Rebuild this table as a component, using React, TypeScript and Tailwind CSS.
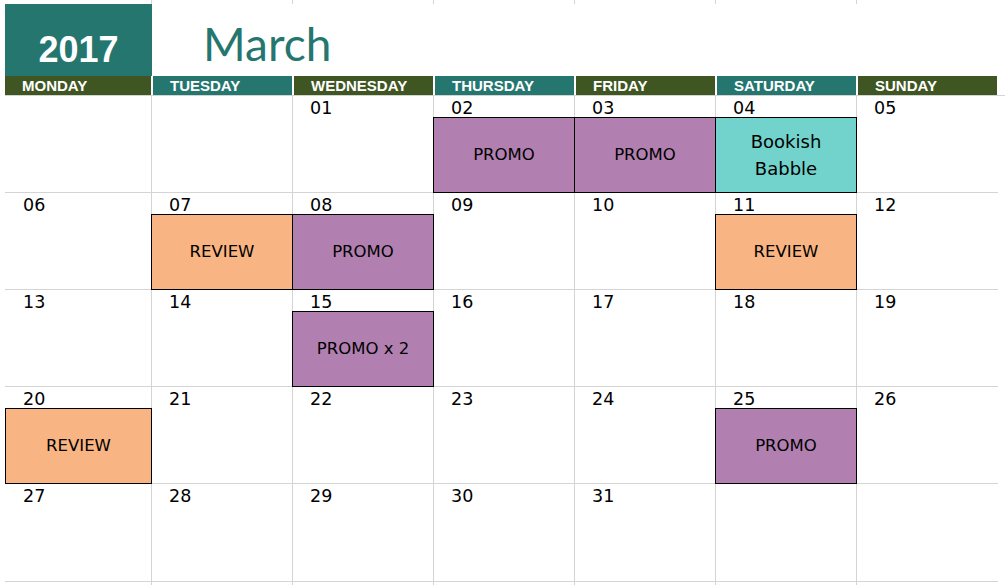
import React from 'react';

type Tone = 'promo' | 'review' | 'guest';
type Ev = { lines: string[]; tone: Tone };
type Day = { n: string; ev?: Ev } | null;

const toneClass: Record<Tone, string> = {
  promo: 'bg-[#b180b1] text-[16.5px] leading-[20px]',
  review: 'bg-[#f8b482] text-[16.5px] leading-[20px]',
  guest: 'bg-[#72d3cc] text-[18px] leading-[27px]',
};

const days = ['MONDAY', 'TUESDAY', 'WEDNESDAY', 'THURSDAY', 'FRIDAY', 'SATURDAY', 'SUNDAY'];

const promo: Ev = { lines: ['PROMO'], tone: 'promo' };
const review: Ev = { lines: ['REVIEW'], tone: 'review' };

const weeks: Day[][] = [
  [null, null, { n: '01' }, { n: '02', ev: promo }, { n: '03', ev: promo }, { n: '04', ev: { lines: ['Bookish', 'Babble'], tone: 'guest' } }, { n: '05' }],
  [{ n: '06' }, { n: '07', ev: review }, { n: '08', ev: promo }, { n: '09' }, { n: '10' }, { n: '11', ev: review }, { n: '12' }],
  [{ n: '13' }, { n: '14' }, { n: '15', ev: { lines: ['PROMO x 2'], tone: 'promo' } }, { n: '16' }, { n: '17' }, { n: '18' }, { n: '19' }],
  [{ n: '20', ev: review }, { n: '21' }, { n: '22' }, { n: '23' }, { n: '24' }, { n: '25', ev: promo }, { n: '26' }],
  [{ n: '27' }, { n: '28' }, { n: '29' }, { n: '30' }, { n: '31' }, null, null],
];

const cols = 'grid grid-cols-[147px_repeat(6,141px)]';

const DayCell: React.FC<{ day: Day; col: number; last: boolean }> = ({ day, col, last }) => (
  <div
    className={`flex flex-col border-b border-[#d4d4d4] ${last ? 'h-[98px]' : 'h-[97px]'} ${
      col < 6 ? 'border-r' : ''
    }`}
  >
    <div className={`h-[21px] shrink-0 text-[17.5px] leading-[24px] ${col === 0 ? 'pl-[18px]' : 'pl-[17px]'}`}>
      {day?.n}
    </div>
    {day?.ev && (
      <div
        className={`h-[76px] shrink-0 -mb-[1px] -mr-[1px] ${col === 0 ? '' : '-ml-[1px]'} border border-black flex flex-col items-center justify-center text-center ${toneClass[day.ev.tone]}`}
      >
        {day.ev.lines.map(l => (
          <span key={l}>{l}</span>
        ))}
      </div>
    )}
  </div>
);

export default function App() {
  return (
    <div className="w-[1005px] h-[585px] overflow-hidden bg-white pl-[5px] text-black font-['DejaVu_Sans',sans-serif]">
      {/* thin strip above the title */}
      <div className={`${cols} h-[4px]`}>
        {days.map((d, i) => (
          <div key={d} className={i < 6 ? 'border-r border-[#d4d4d4]' : ''} />
        ))}
      </div>

      {/* title row */}
      <div className="flex h-[72px]">
        <div className="w-[147px] bg-[#267670] flex items-end justify-center pb-[8px]">
          <span className="text-white text-[36px] leading-none font-bold font-['Liberation_Sans',Arial,sans-serif]">2017</span>
        </div>
        <div className="flex items-end pl-[51px] pb-[9px]">
          <span className="text-[#267670] text-[46px] leading-none font-['Lato',sans-serif]">March</span>
        </div>
      </div>

      {/* weekday headers */}
      <div className={`${cols} h-[20px] border-b border-[#d4d4d4]`}>
        {days.map((d, i) => (
          <div
            key={d}
            className={`h-full mr-[1px] ${i === 0 ? '' : 'ml-[1px]'} ${
              i % 2 === 0 ? 'bg-[#3f5623]' : 'bg-[#267670]'
            } pl-[17px] text-white text-[15px] leading-[19px] font-bold font-['Liberation_Sans',Arial,sans-serif]`}
          >
            {d}
          </div>
        ))}
      </div>

      {/* weeks */}
      {weeks.map((w, wi) => (
        <div key={wi} className={cols}>
          {w.map((day, ci) => (
            <DayCell key={ci} day={day} col={ci} last={wi === weeks.length - 1} />
          ))}
        </div>
      ))}

      {/* gridlines running off the bottom */}
      <div className={`${cols} h-[4px]`}>
        {days.map((d, i) => (
          <div key={d} className={i < 6 ? 'border-r border-[#d4d4d4]' : ''} />
        ))}
      </div>
    </div>
  );
}
